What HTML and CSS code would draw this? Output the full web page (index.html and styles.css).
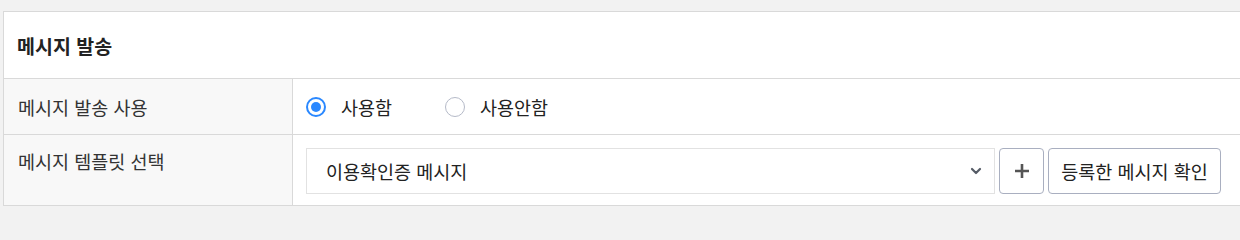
FILE: index.html
```html
<!DOCTYPE html>
<html lang="ko">
<head>
<meta charset="utf-8">
<link rel="stylesheet" href="styles.css">
</head>
<body>
<section class="card">
  <div class="card-head"><h2 class="title">메시지 발송</h2></div>
  <div class="row row-use">
    <div class="label">메시지 발송 사용</div>
    <div class="value radios">
      <label class="radio"><span class="dot checked"></span><span>사용함</span></label>
      <label class="radio"><span class="dot"></span><span>사용안함</span></label>
    </div>
  </div>
  <div class="row row-tpl">
    <div class="label">메시지 템플릿 선택</div>
    <div class="value controls">
      <div class="select">
        <span>이용확인증 메시지</span>
        <svg class="chev" width="12" height="8" viewBox="0 0 12 8"><path d="M2 2 L6 6 L10 2" fill="none" stroke="#555b66" stroke-width="2.2" stroke-linecap="round" stroke-linejoin="round"/></svg>
      </div>
      <button class="btn btn-plus" type="button">
        <svg width="16" height="16" viewBox="0 0 16 16"><path d="M8 1 V15 M1 8 H15" stroke="#555" stroke-width="2.6"/></svg>
      </button>
      <button class="btn btn-text" type="button">등록한 메시지 확인</button>
    </div>
  </div>
</section>
</body>
</html>
```

FILE: styles.css
```css
* { box-sizing: border-box; }
html, body { margin: 0; padding: 0; }
body {
  background: #f2f2f2;
  font-family: "Noto Sans CJK KR", "Noto Sans", sans-serif;
  color: #222;
  overflow: hidden;
}
.card {
  margin: 11px -20px 0 3px;
  background: #fff;
  border: 1px solid #d9d9d9;
}
.card-head {
  height: 67px;
  display: flex;
  align-items: center;
  padding-left: 13px;
  border-bottom: 1px solid #d9d9d9;
}
.title {
  margin: 0;
  font-size: 19.5px;
  font-weight: 700;
  color: #222;
}
.row {
  display: grid;
  grid-template-columns: 289px 1fr;
}
.row-use { height: 56px; border-bottom: 1px solid #d9d9d9; }
.row-tpl { height: 70px; }
.label {
  background: #f8f8f8;
  border-right: 1px solid #d9d9d9;
  padding: 0 14px;
  font-size: 18.5px;
  color: #333;
  display: flex;
  align-items: center;
}
.row-tpl .label { align-items: flex-start; padding-top: 13px; line-height: 26px; }
.value { display: flex; align-items: center; padding: 0 13px; }
.radios { gap: 53px; }
.radio {
  display: flex;
  align-items: center;
  gap: 15px;
  font-size: 18.5px;
  color: #222;
}
.dot {
  width: 20px;
  height: 20px;
  border-radius: 50%;
  border: 1.5px solid #b5bac8;
  display: inline-flex;
  align-items: center;
  justify-content: center;
  background: #fff;
}
.dot.checked { border: 2px solid #2a88ff; }
.dot.checked::after {
  content: "";
  width: 10px;
  height: 10px;
  border-radius: 50%;
  background: #2a88ff;
}
.controls { align-items: flex-start; padding-top: 13px; gap: 4px; }
.select {
  width: 689px;
  height: 46px;
  border: 1px solid #e2e2e2;
  background: #fff;
  display: flex;
  align-items: center;
  justify-content: space-between;
  padding: 0 12px 0 19px;
  font-size: 18.5px;
  color: #222;
}
.btn {
  height: 46px;
  border: 1px solid #a9afc0;
  border-radius: 4px;
  background: #fff;
  font-family: inherit;
  font-size: 18.5px;
  color: #222;
  display: flex;
  align-items: center;
  justify-content: center;
  padding: 0;
}
.btn-plus { width: 45px; }
.btn-text { width: 173px; }
```
